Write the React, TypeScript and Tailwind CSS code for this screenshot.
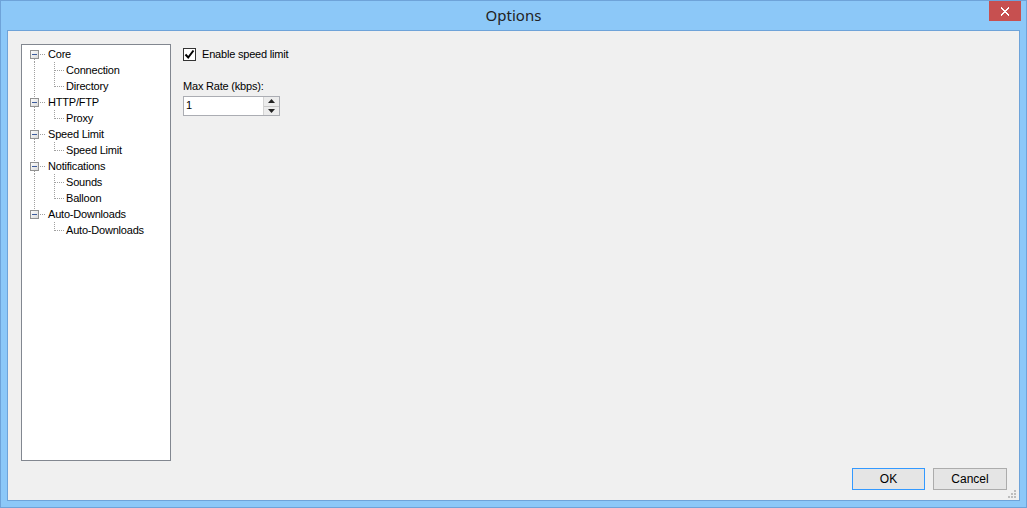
import React from 'react';

type TreeNode = { label: string; children: string[] };

const tree: TreeNode[] = [
  { label: 'Core', children: ['Connection', 'Directory'] },
  { label: 'HTTP/FTP', children: ['Proxy'] },
  { label: 'Speed Limit', children: ['Speed Limit'] },
  { label: 'Notifications', children: ['Sounds', 'Balloon'] },
  { label: 'Auto-Downloads', children: ['Auto-Downloads'] },
];

const LINE = '#a0a0a0';

/**
 * Gutter for a top-level node: expand box plus the trunk line
 */
const ParentGutter: React.FC<{ first: boolean; last: boolean }> = ({ first, last }) => (
  <svg width={25} height={16} className="shrink-0" shapeRendering="crispEdges">
    {!first && <line x1={12.5} y1={0} x2={12.5} y2={4} stroke={LINE} strokeDasharray="1 1" />}
    {!last && <line x1={12.5} y1={13} x2={12.5} y2={16} stroke={LINE} strokeDasharray="1 1" />}
    <line x1={18} y1={8.5} x2={24} y2={8.5} stroke={LINE} strokeDasharray="1 1" />
    <defs>
      <linearGradient id="boxg" x1="0" y1="0" x2="1" y2="1">
        <stop offset="0" stopColor="#ffffff" />
        <stop offset="1" stopColor="#d8d8d8" />
      </linearGradient>
    </defs>
    <rect x={8.5} y={4.5} width={8} height={8} fill="url(#boxg)" stroke="#919191" />
    <line x1={10} y1={8.5} x2={15} y2={8.5} stroke="#3d5c9c" />
  </svg>
);

/**
 * Gutter for a child node: trunk line, branch line and elbow
 */
const ChildGutter: React.FC<{ trunk: boolean; lastChild: boolean }> = ({ trunk, lastChild }) => (
  <svg width={44} height={16} className="shrink-0" shapeRendering="crispEdges">
    {trunk && <line x1={12.5} y1={0} x2={12.5} y2={16} stroke={LINE} strokeDasharray="1 1" />}
    <line x1={32.5} y1={0} x2={32.5} y2={lastChild ? 9 : 16} stroke={LINE} strokeDasharray="1 1" />
    <line x1={33} y1={8.5} x2={42} y2={8.5} stroke={LINE} strokeDasharray="1 1" />
  </svg>
);

const App: React.FC = () => {
  return (
    <div
      className="w-[1027px] h-[508px] flex flex-col bg-[#8cc8f8] border border-[#6ea3d9] text-[11px] tracking-[-0.2px] text-black"
      style={{ fontFamily: '"Liberation Sans", Arial, sans-serif' }}
    >
      {/* Title bar */}
      <div className="relative h-[29px] shrink-0 flex items-center justify-center">
        <span
          className="text-[15px] tracking-normal text-[#222] -mt-[1px]"
          style={{ fontFamily: '"Noto Sans", sans-serif' }}
        >
          Options
        </span>
        <button className="absolute right-[5px] top-0 w-[32px] h-[20px] bg-[#c75050] flex items-center justify-center">
          <svg width={10} height={9} viewBox="0 0 10 9" shapeRendering="crispEdges">
            <path d="M1 0.5 L9 8.5 M9 0.5 L1 8.5" stroke="#fff" strokeWidth={2} />
          </svg>
        </button>
      </div>

      {/* Client area */}
      <div className="mx-[6px] mb-[6px] flex-1 border border-[#6ea3d9] bg-[#f0f0f0] flex flex-col">
        <div className="flex flex-1 pt-[13px] pl-[13px]">
          {/* Tree */}
          <div className="w-[150px] h-[417px] border border-[#828790] bg-white pt-[1px] shrink-0">
            {tree.map((node, i) => {
              const last = i === tree.length - 1;
              return (
                <div key={node.label + i}>
                  <div className="flex items-center h-[16px]">
                    <ParentGutter first={i === 0} last={last} />
                    <span className="pl-[1px] leading-[16px]">{node.label}</span>
                  </div>
                  {node.children.map((child, j) => (
                    <div key={child + j} className="flex items-center h-[16px]">
                      <ChildGutter trunk={!last} lastChild={j === node.children.length - 1} />
                      <span className="leading-[16px]">{child}</span>
                    </div>
                  ))}
                </div>
              );
            })}
          </div>

          {/* Settings */}
          <div className="pl-[12px] pt-[3px] flex flex-col">
            <label className="flex items-center gap-[6px] h-[15px]">
              <span className="w-[13px] h-[13px] border border-[#333] bg-white flex items-center justify-center">
                <svg width={11} height={11} viewBox="0 0 11 11">
                  <path d="M1.5 5.5 L4.2 8.5 L9.5 1.5" fill="none" stroke="#000" strokeWidth={2} />
                </svg>
              </span>
              <span>Enable speed limit</span>
            </label>

            <span className="mt-[17px] leading-[15px]">Max Rate (kbps):</span>

            <div className="mt-[2px] w-[97px] h-[20px] border border-[#abadb3] bg-white flex">
              <span className="flex-1 pl-[2px] leading-[17px]">1</span>
              <div className="w-[16px] flex flex-col border-l border-[#d4d4d4]">
                <div className="flex-1 bg-[#ececec] border-b border-[#c8c8c8] flex items-center justify-center">
                  <svg width={7} height={4} viewBox="0 0 7 4">
                    <path d="M3.5 0 L7 4 L0 4 Z" fill="#222" />
                  </svg>
                </div>
                <div className="flex-1 bg-[#ececec] flex items-center justify-center">
                  <svg width={7} height={4} viewBox="0 0 7 4">
                    <path d="M0 0 L7 0 L3.5 4 Z" fill="#222" />
                  </svg>
                </div>
              </div>
            </div>
          </div>
        </div>

        {/* Footer buttons */}
        <div className="flex justify-end gap-[8px] pr-[12px] pb-[10px] relative">
          <button className="w-[73px] h-[22px] border border-[#3399ff] bg-[#e5e5e5] leading-[20px] text-[12px] tracking-normal">
            OK
          </button>
          <button className="w-[74px] h-[22px] border border-[#acacac] bg-[#e5e5e5] leading-[20px] text-[12px] tracking-normal">
            Cancel
          </button>
          <svg width={9} height={9} className="absolute right-[2px] bottom-[1px]" shapeRendering="crispEdges">
            <rect x={6} y={0} width={2} height={2} fill="#bdbdbd" />
            <rect x={3} y={3} width={2} height={2} fill="#bdbdbd" />
            <rect x={6} y={3} width={2} height={2} fill="#bdbdbd" />
            <rect x={0} y={6} width={2} height={2} fill="#bdbdbd" />
            <rect x={3} y={6} width={2} height={2} fill="#bdbdbd" />
            <rect x={6} y={6} width={2} height={2} fill="#bdbdbd" />
          </svg>
        </div>
      </div>
    </div>
  );
};

export default App;
